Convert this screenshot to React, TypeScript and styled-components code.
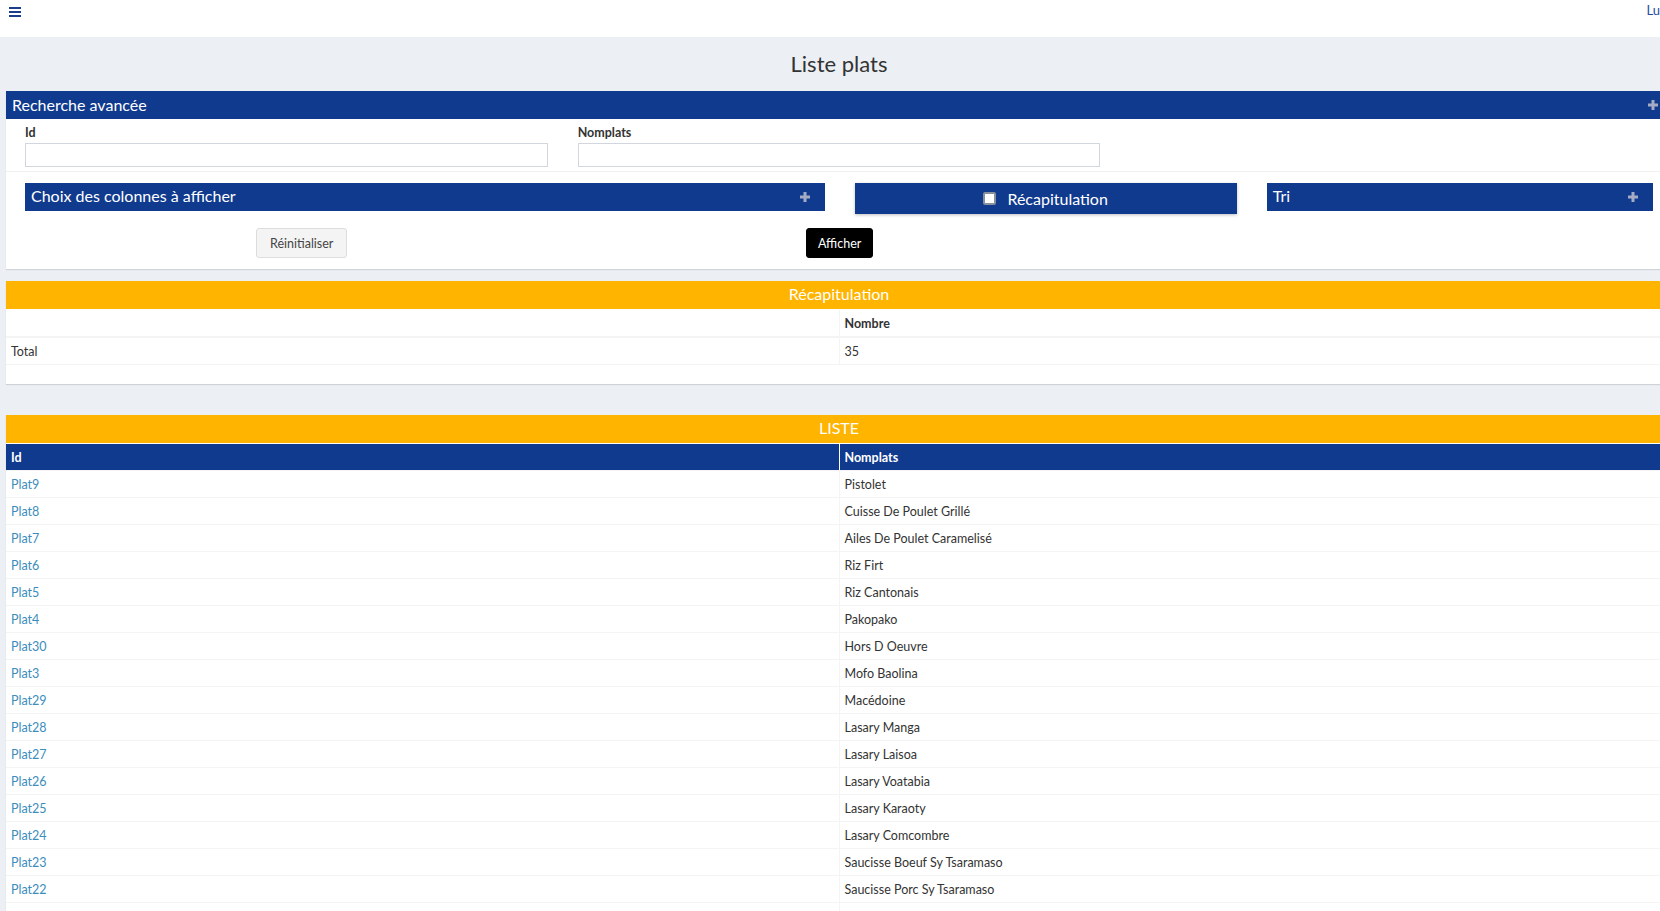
import styled, { createGlobalStyle } from "styled-components";

const GlobalStyle = createGlobalStyle`
  html, body {
    margin: 0;
    padding: 0;
    overflow: hidden;
    background: #ecf0f5;
    font-family: Lato, "Liberation Sans", sans-serif;
    color: #333;
  }
  * {
    box-sizing: border-box;
  }
`;

const plats: [string, string][] = [
  ["Plat9", "Pistolet"],
  ["Plat8", "Cuisse De Poulet Grillé"],
  ["Plat7", "Ailes De Poulet Caramelisé"],
  ["Plat6", "Riz Firt"],
  ["Plat5", "Riz Cantonais"],
  ["Plat4", "Pakopako"],
  ["Plat30", "Hors D Oeuvre"],
  ["Plat3", "Mofo Baolina"],
  ["Plat29", "Macédoine"],
  ["Plat28", "Lasary Manga"],
  ["Plat27", "Lasary Laisoa"],
  ["Plat26", "Lasary Voatabia"],
  ["Plat25", "Lasary Karaoty"],
  ["Plat24", "Lasary Comcombre"],
  ["Plat23", "Saucisse Boeuf Sy Tsaramaso"],
  ["Plat22", "Saucisse Porc Sy Tsaramaso"],
  ["Plat21", "Brochette"],
];

function Plus() {
  return (
    <svg width="10" height="10" viewBox="0 0 10 10">
      <path d="M3.5 0h3v3.5H10v3H6.5V10h-3V6.5H0v-3h3.5z" fill="#a3acc4" />
    </svg>
  );
}

function Burger() {
  return (
    <svg width="12" height="10" viewBox="0 0 12 10">
      <rect x="0" y="0" width="12" height="2" fill="#1c3c8c" />
      <rect x="0" y="4" width="12" height="2" fill="#1c3c8c" />
      <rect x="0" y="8" width="12" height="2" fill="#1c3c8c" />
    </svg>
  );
}

function App() {
  return (
    <>
      <GlobalStyle />
      <TopBar>
        <MenuButton>
          <Burger />
        </MenuButton>
        <UserName>Lu</UserName>
      </TopBar>
      <Content>
        <PageTitle>Liste plats</PageTitle>

        <Box>
          <BoxHeader>
            <span>Recherche avancée</span>
            <Plus />
          </BoxHeader>
          <FieldsRow>
            <Field>
              <Label>Id</Label>
              <Input type="text" />
            </Field>
            <Field>
              <Label>Nomplats</Label>
              <Input type="text" />
            </Field>
          </FieldsRow>
          <BarsRow>
            <BlueBar>
              <span>Choix des colonnes à afficher</span>
              <Plus />
            </BlueBar>
            <RecapBar>
              <Check />
              Récapitulation
            </RecapBar>
            <BlueBar>
              <span>Tri</span>
              <Plus />
            </BlueBar>
          </BarsRow>
          <ButtonRow>
            <Button>Réinitialiser</Button>
            <Button $primary>Afficher</Button>
          </ButtonRow>
        </Box>

        <Box $gap={12}>
          <OrangeHeader>Récapitulation</OrangeHeader>
          <Table $spaced>
            <thead>
              <tr>
                <Th></Th>
                <Th>Nombre</Th>
              </tr>
            </thead>
            <tbody>
              <tr>
                <Td>Total</Td>
                <Td>35</Td>
              </tr>
            </tbody>
          </Table>
        </Box>

        <Box $gap={31}>
          <OrangeHeader>LISTE</OrangeHeader>
          <Table>
            <thead>
              <tr>
                <HeadCell>Id</HeadCell>
                <HeadCell>Nomplats</HeadCell>
              </tr>
            </thead>
            <tbody>
              {plats.map(([id, nom]) => (
                <tr key={id}>
                  <Td>
                    <IdLink href="#">{id}</IdLink>
                  </Td>
                  <Td>{nom}</Td>
                </tr>
              ))}
            </tbody>
          </Table>
        </Box>
      </Content>
    </>
  );
}

export default App;

const TopBar = styled.div`
  height: 37px;
  background: #fff;
  display: flex;
  justify-content: space-between;
  align-items: flex-start;
`;

const MenuButton = styled.div`
  padding: 7px 0 0 9px;
  line-height: 0;
`;

const UserName = styled.div`
  font-size: 13px;
  line-height: 16px;
  padding-top: 2px;
  color: #2a4a9c;
`;

const Content = styled.div`
  width: 1666px;
  margin-left: 6px;
`;

const PageTitle = styled.h1`
  margin: 0;
  height: 54px;
  line-height: 54px;
  text-align: center;
  font-size: 22px;
  font-weight: 400;
  color: #333;
`;

const Box = styled.div<{ $gap?: number }>`
  display: flow-root;
  background: #fff;
  margin-top: ${(p) => p.$gap ?? 0}px;
  box-shadow: 0 1px 1px rgba(0, 0, 0, 0.12);
`;

const BoxHeader = styled.div`
  height: 28px;
  background: #103a8e;
  color: #fff;
  font-size: 16px;
  display: flex;
  justify-content: space-between;
  align-items: center;
  padding: 0 14px 0 6px;

  span {
    margin-top: -2px;
  }
`;

const FieldsRow = styled.div`
  display: grid;
  grid-template-columns: repeat(3, 1fr);
  padding: 6px 4px 4px;
  border-bottom: 1px solid #f0f0f0;
`;

const Field = styled.div`
  padding: 0 15px;
  display: flex;
  flex-direction: column;
`;

const Label = styled.label`
  font-size: 12.5px;
  font-weight: 700;
  line-height: 16px;
  margin-bottom: 2px;
  color: #333;
`;

const Input = styled.input`
  height: 24px;
  border: 1px solid #d2d6de;
  outline: none;
  padding: 0 6px;
`;

const BarsRow = styled.div`
  display: grid;
  grid-template-columns: 799fr 382fr 386fr;
  column-gap: 30px;
  align-items: start;
  padding: 0 19px;
  margin-top: 11px;
`;

const BlueBar = styled.div`
  height: 28px;
  background: #103a8e;
  color: #fff;
  font-size: 16px;
  display: flex;
  justify-content: space-between;
  align-items: center;
  padding: 0 15px 0 6px;

  span {
    margin-top: -3px;
  }
`;

const RecapBar = styled.div`
  height: 31px;
  background: #103a8e;
  color: #fff;
  font-size: 16px;
  display: flex;
  justify-content: center;
  align-items: center;
  gap: 11px;
  box-shadow: 0 1px 3px rgba(0, 0, 0, 0.25);
`;

const Check = styled.span`
  width: 13px;
  height: 13px;
  background: #fff;
  border: 2px solid #8a8f9c;
  border-radius: 2px;
`;

const ButtonRow = styled.div`
  display: flex;
  gap: 459px;
  padding: 14px 0 11px 250px;
`;

const Button = styled.button<{ $primary?: boolean }>`
  height: 30px;
  padding: 0 ${(p) => (p.$primary ? 10.5 : 13)}px;
  font-family: Lato, "Liberation Sans", sans-serif;
  font-size: 12.5px;
  border-radius: 3px;
  border: 1px solid ${(p) => (p.$primary ? "#000" : "#ddd")};
  background: ${(p) => (p.$primary ? "#000" : "#f4f4f4")};
  color: ${(p) => (p.$primary ? "#fff" : "#444")};
`;

const OrangeHeader = styled.div`
  height: 28px;
  line-height: 26px;
  background: #ffb400;
  color: #fff;
  text-align: center;
  font-size: 16px;
  margin-bottom: 1px;
`;

const Table = styled.table<{ $spaced?: boolean }>`
  width: 100%;
  border-collapse: collapse;
  table-layout: fixed;
  margin-bottom: ${(p) => (p.$spaced ? 19 : 0)}px;
  font-size: 12.5px;
`;

const Th = styled.th`
  text-align: left;
  font-weight: 700;
  padding: 6px 5px 4px;
  line-height: 16px;
  border-bottom: 2px solid #f4f4f4;

  & + & {
    border-left: 1px solid #f4f4f4;
  }
`;

const Td = styled.td`
  padding: 6px 5px 4px;
  line-height: 16px;
  border-bottom: 1px solid #f4f4f4;

  & + & {
    border-left: 1px solid #f4f4f4;
  }
`;

const HeadCell = styled.th`
  text-align: left;
  background: #103a8e;
  color: #fff;
  font-weight: 700;
  padding: 6px 5px 4px;
  line-height: 16px;
  border-bottom: 1px solid #f4f4f4;

  & + & {
    border-left: 1px solid #fff;
  }
`;

const IdLink = styled.a`
  color: #3c8dbc;
  text-decoration: none;
`;
